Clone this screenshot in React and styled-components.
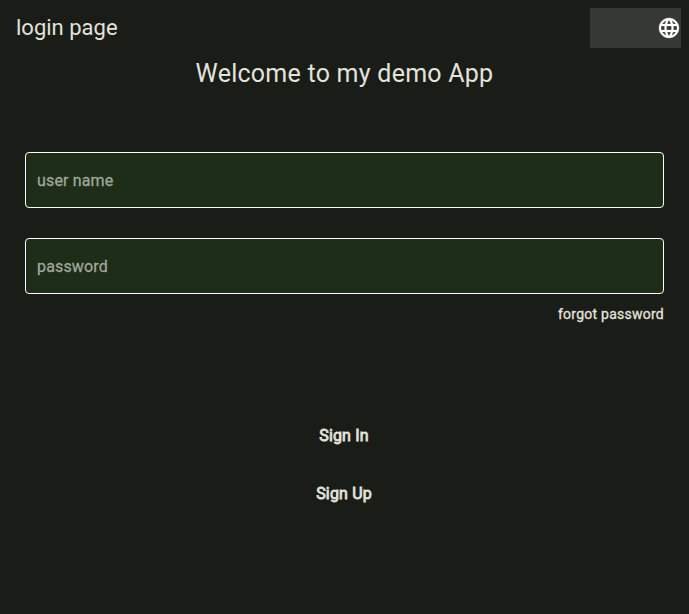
import React from "react";
import styled, { createGlobalStyle } from "styled-components";
import { MdLanguage } from "react-icons/md";

const GlobalStyle = createGlobalStyle`
  * { box-sizing: border-box; }
  body { margin: 0; background: #1a1c18; color: #e2e3dc; font-family: Roboto, sans-serif; }
`;
const Page = styled.main`
  min-height: 614px;
  display: flex;
  flex-direction: column;
`;
const AppBar = styled.header`
  height: 56px;
  padding: 0 8px 0 16px;
  display: flex;
  align-items: center;
  justify-content: space-between;
`;
const AppTitle = styled.h1`
  margin: 0;
  font-size: 22px;
  line-height: 28px;
  font-weight: 400;
`;
const LanguageButton = styled.button`
  width: 91px;
  height: 40px;
  padding: 0;
  border: 0;
  display: flex;
  align-items: center;
  justify-content: flex-end;
  background: #363833;
  color: #fff;
`;
const GlobeIcon = styled(MdLanguage)`
  width: 24px;
  height: 24px;
  path:not([fill="none"]) { stroke: #fff; stroke-width: 0.25px; }
  path[fill="none"] { stroke: none; }
`;
const Welcome = styled.h2`
  margin: 0;
  text-align: center;
  font-size: 25px;
  line-height: 36px;
  font-weight: 400;
  letter-spacing: 0.25px;
`;
const Form = styled.form`
  display: flex;
  flex-direction: column;
  gap: 30px;
  padding: 60px 25px 0;
`;
const Field = styled.input`
  height: 56px;
  padding: 0 11px;
  border: 1px solid #fff;
  border-radius: 4px;
  background: #1d2d17;
  color: #e2e3dc;
  font: 400 16px Roboto, sans-serif;
  letter-spacing: 0.15px;
  &::placeholder { color: #a0a69b; opacity: 1; -webkit-text-stroke: 0.3px #a0a69b; }
`;
const ForgotLink = styled.a`
  align-self: flex-end;
  margin: 10px 25px 0 0;
  font-size: 14px;
  line-height: 20px;
  font-weight: 400;
  letter-spacing: 0.25px;
  -webkit-text-stroke: 0.3px #e2e3dc;
`;
const Actions = styled.div`
  display: flex;
  flex-direction: column;
  align-items: center;
  gap: 18px;
  margin-top: 91px;
`;
const Action = styled.button`
  height: 40px;
  padding: 0 25px 0 24px;
  border: 0;
  background: transparent;
  color: #e2e3dc;
  font: 400 16px Roboto, sans-serif;
  letter-spacing: 0.15px;
  -webkit-text-stroke: 0.8px #e2e3dc;
`;

export default function App() {
  return (
    <Page>
      <GlobalStyle />
      <AppBar>
        <AppTitle>login page</AppTitle>
        <LanguageButton aria-label="Language"><GlobeIcon /></LanguageButton>
      </AppBar>
      <Welcome>Welcome to my demo App</Welcome>
      <Form>
        <Field placeholder="user name" />
        <Field placeholder="password" type="password" />
      </Form>
      <ForgotLink>forgot password</ForgotLink>
      <Actions>
        <Action>Sign In</Action>
        <Action>Sign Up</Action>
      </Actions>
    </Page>
  );
}
